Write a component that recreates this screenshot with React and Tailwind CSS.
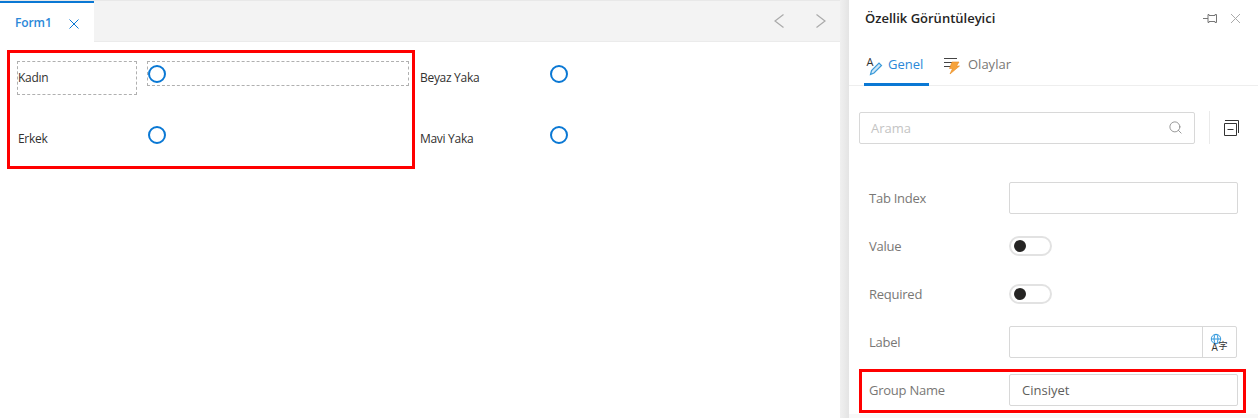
import { Search } from 'lucide-react';

const fontStack = { fontFamily: '"Open Sans", "Noto Sans", sans-serif' };

// Radio circle used on the form canvas
const Radio = () => (
  <div className="w-[18px] h-[18px] rounded-full border-2 border-[#0a78d4] bg-white shrink-0" />
);

const PenIcon = () => (
  <svg className="overflow-visible" width="20" height="20" viewBox="0 0 20 20" fill="none">
    <text x="1.5" y="11" fontSize="11" fill="#333" fontFamily="Open Sans">A</text>
    <path d="M5.5 19.5 L6.5 15.5 L14 8 L16.5 10.5 L9 18 Z" stroke="#3a9ad9" strokeWidth="1.2" fill="#cfe7f7" />
  </svg>
);

const BoltIcon = () => (
  <svg width="20" height="20" viewBox="0 0 20 20" fill="none">
    <path d="M0 3.5 H13 M0 7.5 H13 M0 11.5 H7" stroke="#444" strokeWidth="1" />
    <path d="M8 7 H15 L12.5 11 H15.5 L6 19 L8.5 13.5 H5.5 Z" fill="#f6a33c" stroke="#ea8a1c" strokeWidth="0.6" />
  </svg>
);

const CollapseIcon = () => (
  <svg width="16" height="16" viewBox="0 0 16 16" fill="none">
    <path d="M1 0.5 H14.5 V13" stroke="#333" strokeWidth="1" />
    <path d="M0.5 3.5 H12.5 V15.5 H0.5 Z" stroke="#333" strokeWidth="1" />
    <path d="M3.5 9.5 H9.5" stroke="#333" strokeWidth="1" />
  </svg>
);

const PinIcon = () => (
  <svg width="14" height="9" viewBox="0 0 14 9" fill="none">
    <path d="M0 4.5 H5 M5 0.5 H6 V1.5 H12 V0.5 H13.5 V8.5 H12 V7.5 H6 V8.5 H5 Z" stroke="#777" strokeWidth="1" />
  </svg>
);

const TranslateIcon = () => (
  <svg className="overflow-visible" width="18" height="19" viewBox="0 0 18 19" fill="none">
    <circle cx="5" cy="6" r="4.7" stroke="#2f97dd" strokeWidth="1" />
    <ellipse cx="5" cy="6" rx="2" ry="4.7" stroke="#2f97dd" strokeWidth="1" />
    <path d="M0.5 6 H9.5" stroke="#2f97dd" strokeWidth="1" />
    <text x="0.5" y="17.5" fontSize="10" fill="#333" fontFamily="Open Sans">A</text>
    <text x="7.5" y="16" fontSize="9" fill="#333" fontFamily="Noto Sans CJK SC">字</text>
  </svg>
);

const Toggle = () => (
  <div className="w-[43px] h-[20px] rounded-full border-2 border-[#e2e2e2] bg-white flex items-center pl-[3px]">
    <div className="w-[12px] h-[12px] rounded-full bg-[#252423]" />
  </div>
);

const Field = ({ label, children }) => (
  <div className="h-[48px] flex items-center pl-[20px]">
    <div className="w-[140px] pt-[2px] text-[13px] tracking-[-0.25px] text-[#797775]">{label}</div>
    {children}
  </div>
);

export default function App() {
  return (
    <div className="relative w-[1258px] h-[418px] flex overflow-hidden bg-white" style={fontStack}>
      {/* Designer area */}
      <div className="w-[840px] shrink-0">
        <div className="h-[42px] flex bg-[#f3f3f3] border-b border-[#ebebeb] border-t border-t-[#e8e8e8]">
          <div className="w-[94px] h-[41px] bg-white border-t-2 border-[#0a78d4] flex items-center pl-[15px]">
            <span className="text-[12px] font-semibold tracking-[-0.1px] text-[#2b88d8]">Form1</span>
            <svg className="ml-[17px] mt-[3px]" width="10" height="10" viewBox="0 0 10 10" fill="none">
              <path d="M0.5 0.5 L9.5 9.5 M9.5 0.5 L0.5 9.5" stroke="#0a78d4" strokeWidth="1" />
            </svg>
          </div>
          <div className="ml-auto flex items-center gap-[32px] pr-[14px]">
            <svg width="10" height="14" viewBox="0 0 10 14" fill="none">
              <path d="M9.5 0.5 L1 7 L9.5 13.5" stroke="#aaa" strokeWidth="1.2" />
            </svg>
            <svg width="10" height="14" viewBox="0 0 10 14" fill="none">
              <path d="M0.5 0.5 L9 7 L0.5 13.5" stroke="#aaa" strokeWidth="1.2" />
            </svg>
          </div>
        </div>

        {/* Form canvas */}
        <div className="pl-[17px] pt-[19px] text-[12px] tracking-[-0.3px] text-[#323130]">
          <div className="flex h-[61px]">
            <div className="w-[120px] h-[34px] border border-dashed border-[#b0b0b0] flex items-center">Kadın</div>
            <div className="ml-[10px] w-[262px] h-[25px] border border-dashed border-[#b0b0b0] pt-[3px]">
              <Radio />
            </div>
            <div className="ml-[11px] w-[130px] h-[34px] flex items-center">Beyaz Yaka</div>
            <div className="pt-[4px]"><Radio /></div>
          </div>
          <div className="flex h-[61px]">
            <div className="w-[131px] h-[34px] flex items-center pl-px">Erkek</div>
            <div className="w-[272px] pt-[4px]"><Radio /></div>
            <div className="w-[130px] h-[34px] flex items-center">Mavi Yaka</div>
            <div className="pt-[4px]"><Radio /></div>
          </div>
        </div>
      </div>

      {/* Panel shadow */}
      <div className="w-[9px] shrink-0 bg-gradient-to-r from-[#f0f0f0] to-[#e4e4e4]" />

      {/* Property panel */}
      <div className="flex-1 flex flex-col">
        <div className="h-[37px] flex items-center pl-[16px] pr-[18px]">
          <span className="text-[13px] font-semibold text-[#252423]">Özellik Görüntüleyici</span>
          <div className="ml-auto flex items-center gap-[14px]">
            <PinIcon />
            <svg width="9" height="9" viewBox="0 0 9 9" fill="none">
              <path d="M0 0 L9 9 M9 0 L0 9" stroke="#aaa" strokeWidth="1" />
            </svg>
          </div>
        </div>
        <div className="h-[49px] flex border-b border-[#eeeeee] pl-[15px]">
          <div className="w-[65px] h-[49px] flex items-center gap-[3px] pl-px border-b-[3px] border-[#0a78d4] pt-[9px]">
            <PenIcon />
            <span className="text-[13px] text-[#2b88d8]">Genel</span>
          </div>
          <div className="ml-[15px] h-[46px] flex items-center gap-[4px] pt-[10px]">
            <BoltIcon />
            <span className="text-[13px] text-[#797775]">Olaylar</span>
          </div>
        </div>

        <div className="mt-[25px] flex items-center pl-[10px]">
          <div className="w-[336px] h-[32px] rounded-[2px] border border-[#d8d8d8] flex items-center pl-[11px] pr-[11px]">
            <span className="pt-[2px] text-[13px] text-[#c4c4c4]">Arama</span>
            <Search className="ml-auto text-[#8a8a8a]" size={15} strokeWidth={1.4} />
          </div>
          <div className="ml-[14px] w-px h-[33px] bg-[#eaeaea]" />
          <div className="ml-[14px]"><CollapseIcon /></div>
        </div>

        <div className="mt-[30px] flex flex-col">
          <Field label="Tab Index">
            <div className="w-[229px] h-[32px] rounded-[2px] border border-[#d8d8d8]" />
          </Field>
          <Field label="Value"><Toggle /></Field>
          <Field label="Required"><Toggle /></Field>
          <Field label="Label">
            <div className="w-[228px] h-[32px] rounded-[2px] border border-[#d8d8d8] flex justify-end">
              <div className="w-[34px] border-l border-[#d8d8d8] flex items-center justify-center">
                <TranslateIcon />
              </div>
            </div>
          </Field>
          <Field label="Group Name">
            <div className="w-[229px] h-[32px] rounded-[2px] border border-[#d8d8d8] flex items-center pl-[12px] pt-[2px] text-[13px] text-[#605e5c]">
              Cinsiyet
            </div>
          </Field>
        </div>
        <div className="flex-1 bg-[#f8f8f8]" />
      </div>

      {/* Annotation frames drawn over the screenshot */}
      <div className="absolute left-[7px] top-[50px] w-[408px] h-[119px] border-[3px] border-[#ff0000]" />
      <div className="absolute left-[859px] top-[369px] w-[387px] h-[44px] border-[3px] border-[#ff0000]" />
    </div>
  );
}
